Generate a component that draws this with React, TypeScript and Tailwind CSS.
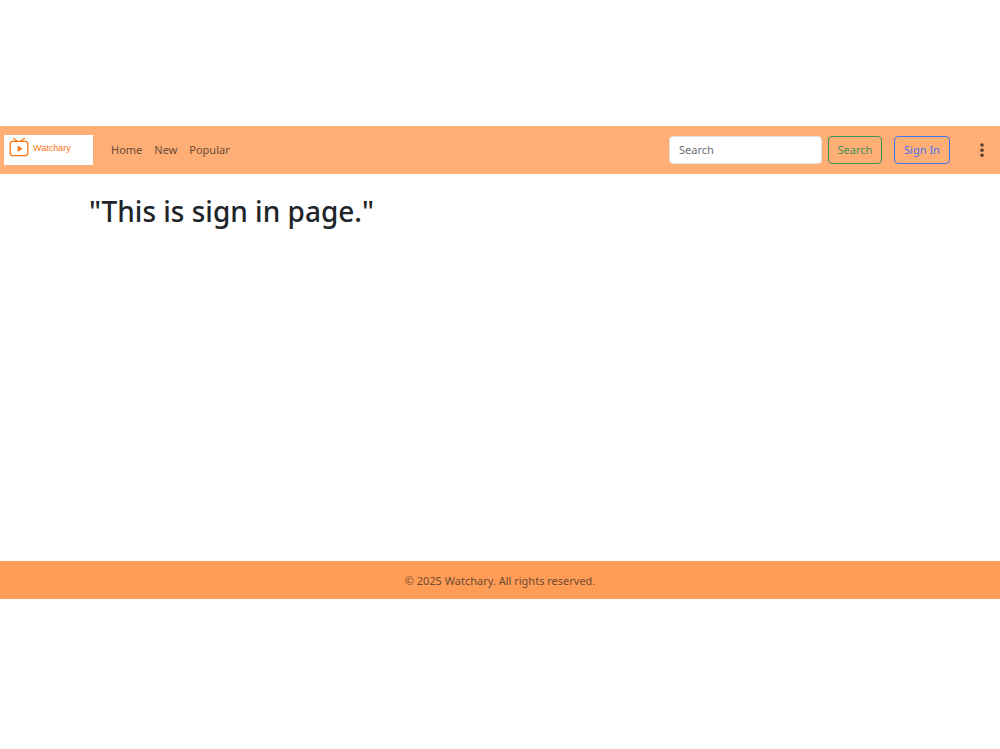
import { useState } from "react";

const links = ["Home", "New", "Popular"];

function Logo() {
  return (
    <a href="#" className="flex h-[30px] w-[89px] items-start bg-white pl-1 pt-[2px] text-[#ff7514]">
      <svg viewBox="0 0 22 22" className="h-[22px] w-[22px] shrink-0" fill="none" aria-hidden="true">
        <rect x="2.2" y="4.3" width="17.6" height="14.4" rx="2.4" stroke="currentColor" strokeWidth="1.3" />
        <path d="M9.2 4Q7.6 3.6 5.6 1.2M12.8 4Q14.4 3.6 16.4 1.2" stroke="currentColor" strokeWidth="1.3" strokeLinecap="round" />
        <path d="M9.7 8.6v6.4l4.8-3.2z" fill="currentColor" />
      </svg>
      <span className="pl-[3px] pt-[5px] font-['Liberation_Sans',sans-serif] text-[9px] leading-3">Watchary</span>
    </a>
  );
}

function Navbar() {
  const [query, setQuery] = useState("");

  return (
    <nav className="flex h-12 items-center bg-[#ffae76] pl-1 pr-3 text-[11px]">
      <Logo />

      {/* Main links */}
      <div className="flex gap-3 pl-[18px] text-[#6b4d3a]">
        {links.map((item) => (
          <a key={item} href="#" className="hover:text-[#212529]">
            {item}
          </a>
        ))}
      </div>

      {/* Search and account */}
      <form className="ml-auto flex gap-[6px]" onSubmit={(e) => e.preventDefault()}>
        <input
          type="search"
          aria-label="Search"
          placeholder="Search"
          value={query}
          onChange={(e) => setQuery(e.target.value)}
          className="h-7 w-[153px] rounded-[4px] border border-[#dee2e6] bg-white px-[9px] pb-[2px] text-[#212529] outline-none placeholder:text-[#6c6f73]"
        />
        <button type="submit" className="h-7 w-[54px] rounded-[4px] border border-[#3f8f58] text-[#3f8f58]">
          Search
        </button>
      </form>
      <button type="button" className="ml-3 h-7 w-14 rounded-[4px] border border-[#4474ee] text-[#4474ee]">
        Sign In
      </button>
      <button type="button" aria-label="More options" className="ml-[26px] flex h-7 w-3 items-center justify-center text-[#5c4230]">
        <svg viewBox="0 0 4 14" className="h-[14px] w-1" fill="currentColor" aria-hidden="true">
          <circle cx="2" cy="2" r="1.8" />
          <circle cx="2" cy="7.3" r="1.8" />
          <circle cx="2" cy="12.2" r="1.8" />
        </svg>
      </button>
    </nav>
  );
}

export default function App() {
  return (
    <div className="min-h-screen bg-white pt-[126px] font-['Noto_Sans',sans-serif]">
      <Navbar />

      <main className="min-h-[387px] px-[89px] pt-[18px]">
        <h1 className="text-[28px] font-medium leading-[38px] text-[#212529]">"This is sign in page."</h1>
      </main>

      <footer className="flex h-[38px] items-center justify-center bg-[#ff9d57] pt-[2px] text-[11px] text-[#6f4b33]">
        <p>© 2025 Watchary. All rights reserved.</p>
      </footer>
    </div>
  );
}
